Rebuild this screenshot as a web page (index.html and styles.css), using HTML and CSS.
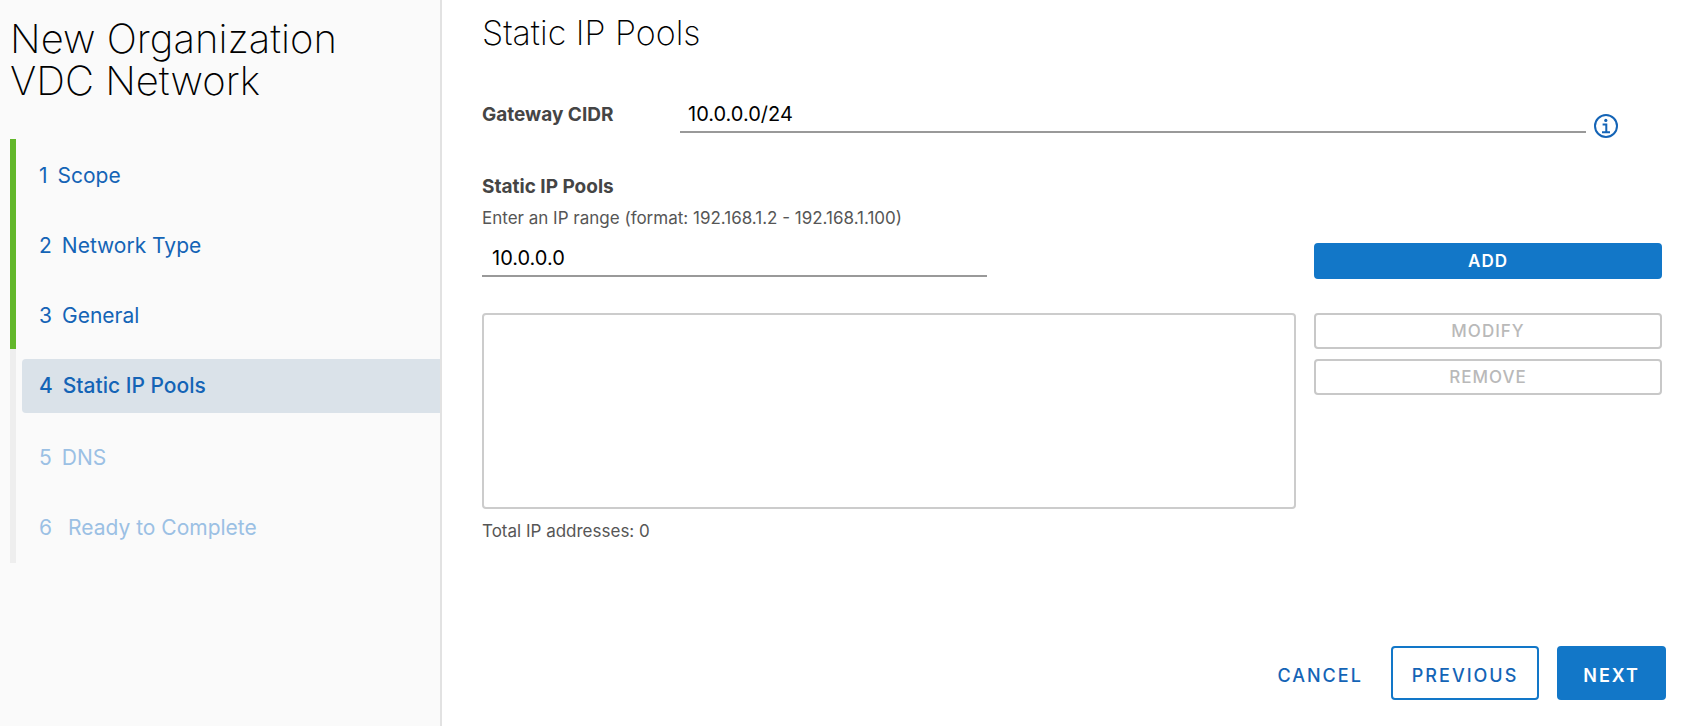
FILE: index.html
```html
<!DOCTYPE html>
<html lang="en">
<head>
<meta charset="utf-8">
<meta name="viewport" content="width=device-width, initial-scale=1">
<title>New Organization VDC Network</title>
<link rel="stylesheet" href="styles.css">
</head>
<body>
<div class="wizard">
  <aside class="sidebar">
    <h1 class="wizard-title">New Organization VDC Network</h1>
    <nav aria-label="Wizard steps">
      <ol class="steps">
        <li class="step step-done"><button type="button" class="step-link"><span>1</span><span>Scope</span></button></li>
        <li class="step step-done"><button type="button" class="step-link"><span>2</span><span>Network Type</span></button></li>
        <li class="step step-done"><button type="button" class="step-link"><span>3</span><span>General</span></button></li>
        <li class="step step-current"><button type="button" class="step-link" aria-current="step"><span>4</span><span>Static IP Pools</span></button></li>
        <li class="step"><button type="button" class="step-link" disabled><span>5</span><span>DNS</span></button></li>
        <li class="step step-last"><button type="button" class="step-link" disabled><span>6</span><span>Ready to Complete</span></button></li>
      </ol>
    </nav>
  </aside>
  <main class="page">
    <h2 class="page-title">Static IP Pools</h2>
    <form class="page-form">
      <div class="gateway">
        <label class="label" for="gateway">Gateway CIDR</label>
        <input class="input gateway-input" id="gateway" type="text" value="10.0.0.0/24">
        <button type="button" class="info" aria-label="Gateway information">
          <svg width="24" height="24" viewBox="0 0 24 24" fill="none" stroke="currentColor" aria-hidden="true">
            <circle cx="12" cy="12" r="11" stroke-width="2"/>
            <circle cx="11.8" cy="6.4" r="1.6" fill="currentColor" stroke="none"/>
            <path d="M8.6 10.4H12.3V18M8 18.2H16" stroke-width="2"/>
          </svg>
        </button>
      </div>
      <div class="pools">
        <div class="pool-entry">
          <label class="label" for="range">Static IP Pools</label>
          <p class="hint" id="range-hint">Enter an IP range (format: 192.168.1.2 - 192.168.1.100)</p>
          <input class="input range-input" id="range" type="text" value="10.0.0.0" aria-describedby="range-hint">
        </div>
        <button type="button" class="btn btn-primary btn-add">ADD</button>
        <select class="pool-list" multiple aria-label="Static IP pools"></select>
        <div class="pool-actions">
          <button type="button" class="btn" disabled>MODIFY</button>
          <button type="button" class="btn" disabled>REMOVE</button>
        </div>
      </div>
      <p class="hint total">Total IP addresses: 0</p>
    </form>
    <footer class="footer">
      <button type="button" class="btn btn-large btn-link">CANCEL</button>
      <button type="button" class="btn btn-large btn-outline">PREVIOUS</button>
      <button type="button" class="btn btn-large btn-primary">NEXT</button>
    </footer>
  </main>
</div>
</body>
</html>
```
FILE: styles.css
```css
* {
  box-sizing: border-box;
}

body {
  margin: 0;
  background: #fff;
  color: #000;
  font-family: Inter, "Liberation Sans", sans-serif;
}

button,
input,
select {
  font: inherit;
}

.wizard {
  display: flex;
  min-height: 100vh;
}

.sidebar {
  flex: 0 0 442px;
  padding: 18px 0 0 10px;
  background: #fafafa;
  border-right: 2px solid #e2e2e2;
}

.wizard-title {
  max-width: 380px;
  margin: 0 0 37px;
  font-size: 40px;
  font-weight: 200;
  line-height: 42px;
}

.steps {
  margin: 0;
  padding: 0;
  list-style: none;
}

.step {
  padding: 10px 0 6px 6px;
  border-left: 6px solid #eee;
}

.step-done {
  border-left-color: #62b72a;
}

.step-current,
.step-last {
  padding-bottom: 8px;
}

.step-link {
  display: flex;
  align-items: center;
  gap: 10px;
  width: 100%;
  height: 54px;
  padding: 0 17px 2px;
  border: 0;
  border-radius: 4px 0 0 4px;
  background: none;
  color: #1464b6;
  font-size: 21px;
  text-align: left;
}

.step-current .step-link {
  background: #dae2e9;
  font-weight: 500;
}

.step-link:disabled {
  color: #9bc0e4;
}

.step-last .step-link {
  gap: 16px;
}

.page {
  display: flex;
  flex: 1;
  flex-direction: column;
  min-width: 0;
  padding: 12px 26px 26px 40px;
}

.page-title {
  margin: 0;
  font-size: 34px;
  font-weight: 200;
  line-height: 42px;
}

.gateway {
  display: flex;
  align-items: flex-start;
  margin-top: 43px;
  padding-right: 44px;
}

.label {
  flex: 0 0 198px;
  color: #454545;
  font-size: 19px;
  font-weight: 700;
  line-height: 36px;
}

.input {
  height: 36px;
  padding: 0 8px;
  border: 0;
  border-bottom: 2px solid #999;
  background: none;
  color: #000;
  font-size: 20px;
}

.gateway-input {
  flex: 1;
  min-width: 0;
}

.info {
  display: flex;
  margin: 17px 0 0 8px;
  padding: 0;
  border: 0;
  background: none;
  color: #1464b6;
}

.pools {
  display: grid;
  grid-template-columns: 1fr 348px;
  gap: 34px 18px;
  margin-top: 37px;
}

.pool-entry {
  display: flex;
  flex-direction: column;
  align-items: flex-start;
  padding-bottom: 2px;
}

.pool-entry .label {
  flex: none;
  line-height: 24px;
}

.hint {
  margin: 7px 0 0;
  color: #565656;
  font-size: 17px;
  line-height: 24px;
}

.range-input {
  width: 62%;
  margin-top: 11px;
  padding: 0 10px;
}

.btn {
  height: 36px;
  padding: 0 18px;
  border: 2px solid #c8c8c8;
  border-radius: 4px;
  background: #fff;
  color: #b9b9b9;
  font-size: 17px;
  font-weight: 500;
  letter-spacing: 1px;
}

.btn-primary {
  border-color: #1277c8;
  background: #1277c8;
  color: #fff;
  font-weight: 600;
}

.btn-add {
  align-self: end;
}

.pool-list {
  width: 100%;
  height: 196px;
  border: 2px solid #ccc;
  border-radius: 4px;
  background: #fff;
}

.pool-actions {
  display: flex;
  flex-direction: column;
  gap: 10px;
}

.total {
  margin-top: 10px;
}

.footer {
  display: flex;
  justify-content: flex-end;
  gap: 18px;
  margin-top: auto;
  margin-right: -4px;
}

.btn-large {
  height: 54px;
  padding: 4px 19px 0;
  font-size: 18px;
  letter-spacing: 2px;
}

.btn-large.btn-primary {
  padding: 4px 24px 0;
}

.btn-outline {
  border-color: #1277c8;
  color: #1464b6;
}

.btn-link {
  padding: 4px 8px 0;
  border-color: transparent;
  background: none;
  color: #1464b6;
}
```
